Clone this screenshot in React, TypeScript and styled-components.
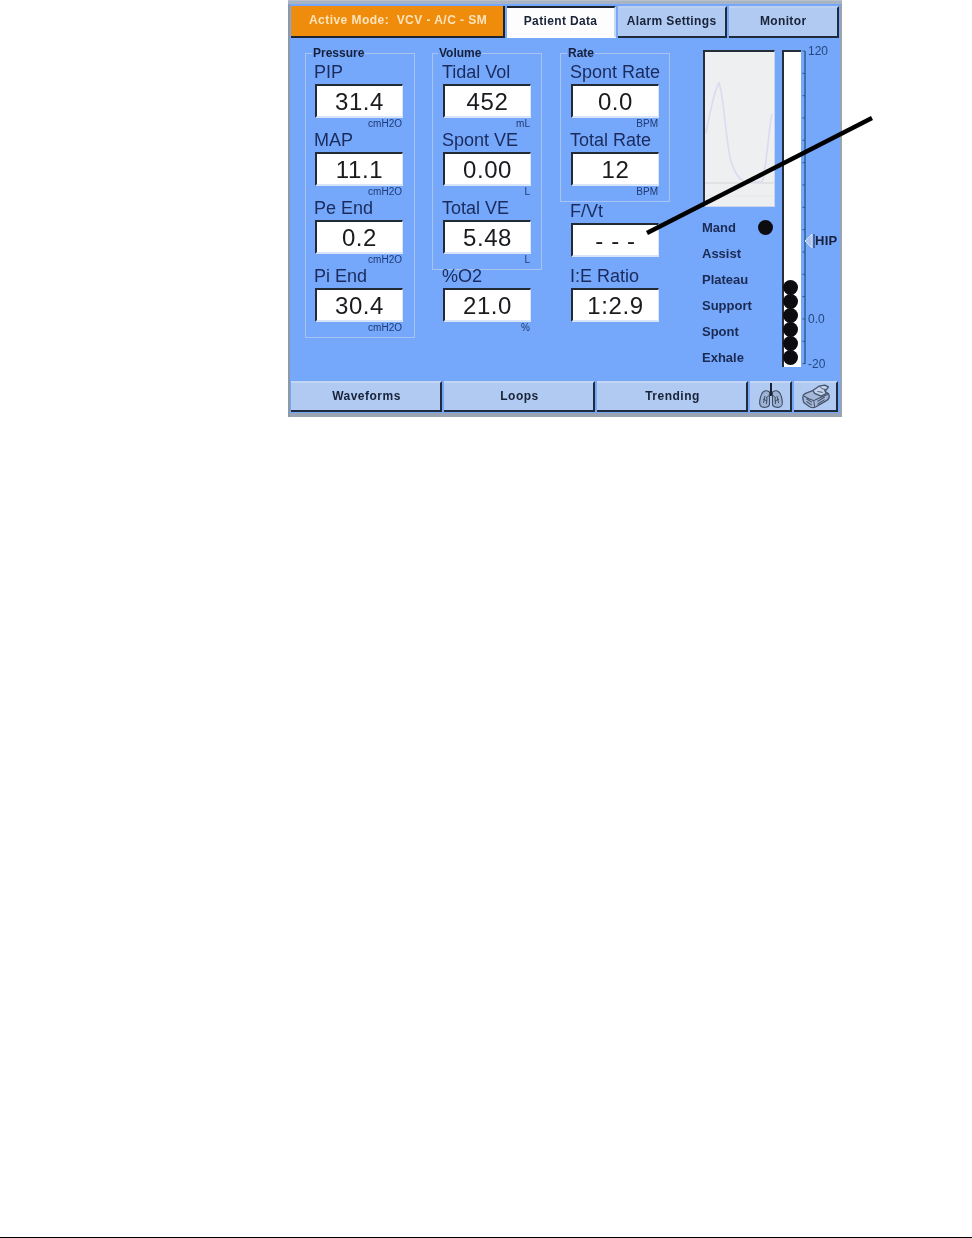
import React from "react";
import styled, { createGlobalStyle } from "styled-components";

const Global = createGlobalStyle`
  html, body { margin: 0; padding: 0; background: #fff; }
  body { font-family: "Liberation Sans", Arial, sans-serif; }
`;

const Page = styled.div`
  width: 972px;
  height: 1238px;
  display: flex;
  flex-direction: column;
  overflow: hidden;
`;
const Screen = styled.div`
  position: relative;
  box-sizing: border-box;
  width: 554px;
  height: 417px;
  margin-left: 288px;
  padding: 5px 3px 5px 3px;
  background: #75a7fa;
  display: flex;
  flex-direction: column;
  border-top: 1px solid #b9c0c8;
  box-shadow: inset 0 3px 0 #a7b4c6, inset 2px 0 0 #8d99a8, inset -2px 0 0 #98a4b2, inset 0 -4px 0 #9aa5b3;
`;
const TopBar = styled.div`
  display: flex;
  gap: 2px;
  height: 32px;
  flex: none;
  filter: blur(0.5px);
`;
const ModeBanner = styled.div`
  box-sizing: border-box;
  width: 215px;
  background: #f08c0c;
  border-right: 2px solid #1c2430;
  border-bottom: 2px solid #1c2430;
  color: #fbe3bb;
  font-size: 12px;
  font-weight: 700;
  line-height: 29px;
  padding-left: 18px;
  white-space: pre;
  letter-spacing: 0.45px;
`;
const Tab = styled.div<{ $active?: boolean; $w: number }>`
  box-sizing: border-box;
  width: ${(p) => p.$w}px;
  display: flex;
  align-items: center;
  justify-content: center;
  padding-bottom: 3px;
  font-size: 12px;
  font-weight: 700;
  letter-spacing: 0.35px;
  color: #182238;
  background: ${(p) => (p.$active ? "#fdfdfd" : "#b1caf1")};
  border-top: 2px solid ${(p) => (p.$active ? "#1c2430" : "#bcd0f0")};
  border-right: 2px solid ${(p) => (p.$active ? "#c9d8f2" : "#1f2a3a")};
  border-bottom: 2px solid ${(p) => (p.$active ? "#fdfdfd" : "#1f2a3a")};
`;
const Body = styled.div`
  flex: 1;
  display: flex;
  padding: 8px 0 0 14px;
  min-height: 0;
  filter: blur(0.5px);
`;
const Column = styled.div`
  width: 110px;
  margin-right: 18px;
  flex: none;
  &:first-child { margin-right: 17px; }
`;
const Group = styled.fieldset<{ $inset: number }>`
  box-sizing: border-box;
  width: 110px;
  margin: 0;
  padding: 4px 0 1px ${(p) => p.$inset}px;
  border: 1px solid #a9c4f0;
  min-inline-size: 0;
`;
const GroupTitle = styled.legend<{ $nudge: number }>`
  font-size: 12px;
  line-height: 14px;
  font-weight: 700;
  color: #16203a;
  padding: 0 1px;
  margin-left: ${(p) => p.$nudge}px;
`;
const LooseStack = styled.div<{ $top: number }>`
  display: flex;
  flex-direction: column;
  gap: 11px;
  margin: ${(p) => p.$top}px 0 0 11px;
`;
const Field = styled.div`
  width: 88px;
`;
const FieldLabel = styled.div`
  font-size: 18px;
  line-height: 17px;
  height: 20px;
  color: #1a2b5c;
  white-space: nowrap;
  margin-left: -1px;
`;
const ValueBox = styled.div`
  box-sizing: border-box;
  height: 34px;
  background: #fff;
  border-top: 2px solid #222a36;
  border-left: 2px solid #222a36;
  border-right: 1px solid #d8e4f8;
  border-bottom: 2px solid #d8e4f8;
  font-size: 24px;
  line-height: 31px;
  letter-spacing: 0.6px;
  text-align: center;
  color: #1b1b1f;
`;
const Unit = styled.div`
  height: 14px;
  font-size: 10px;
  line-height: 11px;
  text-align: right;
  color: #1f3a74;
  padding-right: 1px;
`;
const Monitor = styled.div`
  width: 72px;
  margin: 4px 0 0 15px;
  flex: none;
`;
const WavePanel = styled.div`
  box-sizing: border-box;
  width: 72px;
  height: 157px;
  background: #eeeff1;
  border-top: 2px solid #262e3a;
  border-left: 2px solid #262e3a;
  border-right: 1px solid #c9d6ee;
  border-bottom: 1px solid #c9d6ee;
`;
const WaveSvg = styled.svg`
  display: block;
`;
const ModeList = styled.div`
  margin-top: 7px;
`;
const ModeRow = styled.div`
  height: 26px;
  display: flex;
  align-items: center;
  justify-content: space-between;
  font-size: 13px;
  font-weight: 700;
  color: #1a2a52;
  margin: 0 2px 0 -1px;
`;
const Dot = styled.span`
  width: 15px;
  height: 15px;
  border-radius: 50%;
  background: #0b0b10;
  flex: none;
`;
const Gauge = styled.div`
  box-sizing: border-box;
  width: 19px;
  height: 317px;
  margin: 4px 0 0 7px;
  flex: none;
  background: #fff;
  border-top: 2px solid #262e3a;
  border-left: 2px solid #262e3a;
  display: flex;
  flex-direction: column;
  justify-content: flex-end;
  padding-bottom: 2px;
`;
const GaugeDot = styled(Dot)`
  display: block;
  margin: -1px 0 0 -1px;
`;
const Scale = styled.div`
  position: relative;
  width: 36px;
  height: 330px;
  flex: none;
`;
const ScaleSvg = styled.svg`
  position: absolute;
  left: 0;
  top: 0;
`;
const ScaleLabel = styled.span<{ $y: number }>`
  position: absolute;
  left: 7px;
  top: ${(p) => p.$y}px;
  font-size: 12px;
  line-height: 14px;
  color: #24487f;
`;
const HighMark = styled.span`
  position: absolute;
  left: 14px;
  top: 188px;
  font-size: 13px;
  line-height: 14px;
  font-weight: 700;
  letter-spacing: 0.3px;
  color: #16203a;
`;
const BottomBar = styled.div`
  display: flex;
  gap: 2px;
  height: 31px;
  flex: none;
  filter: blur(0.5px);
`;
const NavButton = styled.div<{ $w: number }>`
  box-sizing: border-box;
  width: ${(p) => p.$w}px;
  display: flex;
  align-items: center;
  justify-content: center;
  padding: 0 0 1px 2px;
  background: #b1caf1;
  border-top: 2px solid #c2d5f2;
  border-right: 2px solid #1f2a3a;
  border-bottom: 2px solid #1f2a3a;
  font-size: 12px;
  font-weight: 700;
  letter-spacing: 0.5px;
  color: #182238;
`;
const Pointer = styled.svg`
  position: absolute;
  left: 0;
  top: 0;
  overflow: visible;
  pointer-events: none;
`;
const Rule = styled.div`
  margin-top: auto;
  height: 1px;
  background: #000;
  flex: none;
`;

type F = { label: string; value: string; unit?: string };

const Metric = ({ label, value, unit }: F) => (
  <Field>
    <FieldLabel>{label}</FieldLabel>
    <ValueBox>{value}</ValueBox>
    {unit !== undefined && <Unit>{unit}</Unit>}
  </Field>
);

const pressure: F[] = [
  { label: "PIP", value: "31.4", unit: "cmH2O" },
  { label: "MAP", value: "11.1", unit: "cmH2O" },
  { label: "Pe End", value: "0.2", unit: "cmH2O" },
  { label: "Pi End", value: "30.4", unit: "cmH2O" },
];
const volume: F[] = [
  { label: "Tidal Vol", value: "452", unit: "mL" },
  { label: "Spont VE", value: "0.00", unit: "L" },
  { label: "Total VE", value: "5.48", unit: "L" },
];
const rate: F[] = [
  { label: "Spont Rate", value: "0.0", unit: "BPM" },
  { label: "Total Rate", value: "12", unit: "BPM" },
];
const modes = ["Mand", "Assist", "Plateau", "Support", "Spont", "Exhale"];

const Lungs = () => (
  <svg width="28" height="26" viewBox="0 0 28 26" fill="none" stroke="#3f4d64" strokeWidth="1.1">
    <path d="M12.5 9C8 6 4.500 9 3.500 14c-1 4-2 9 1.500 10 3 1 7.500 0 7.500-3z" fill="#9db3d6" />
    <path d="M15.500 9c4.500-3 8 0 9 5 1 4 2 9-1.500 10-3 1-7.500 0-7.500-3z" fill="#9db3d6" />
    <path d="M14 11l-5 4M14 11l5 4M8 13l-1.500 7M10 15l-.5 6M6 16l4 2M20 13l1.500 7M18 15l.5 6M22 16l-4 2" strokeWidth="1" />
    <path d="M14 0v13" stroke="#1a2232" strokeWidth="2" />
  </svg>
);
const Printer = () => (
  <svg width="31" height="25" viewBox="0 0 34 27" fill="none" stroke="#465268" strokeWidth="1.4" strokeLinejoin="round">
    <path d="M2 14c0-2 1-3 3-4l13-5 10 4c2 1 3 2 3 4s-1 4-3 5l-12 7c-2 1-4 1-6 0l-6-4c-2-2-2-4-2-7z" fill="#a4b9da" />
    <path d="M3 13c4 2 7 4 11 5 5-2 10-5 16-7M14 18l1 7M6 16l6 4M6 19l6 4M18 19l8-5M18 22l8-5" strokeWidth="1.1" />
    <path d="M13 7l7-5 6-1 4 2-2 3-2 1 2 3-6 3-7-3z" fill="#c4d4ee" />
    <path d="M20 2l3 3 5 1M18 8l6 1" strokeWidth="1" />
  </svg>
);

export default function App() {
  return (
    <Page>
      <Global />
      <Screen>
        <TopBar>
          <ModeBanner>{"Active Mode:  VCV - A/C - SM"}</ModeBanner>
          <Tab $active $w={109}>Patient Data</Tab>
          <Tab $w={110}>Alarm Settings</Tab>
          <Tab $w={110}>Monitor</Tab>
        </TopBar>
        <Body>
          <Column>
            <Group $inset={9}>
              <GroupTitle $nudge={-3}>Pressure</GroupTitle>
              {pressure.map((f) => <Metric key={f.label} {...f} />)}
            </Group>
          </Column>
          <Column>
            <Group $inset={10}>
              <GroupTitle $nudge={-5}>Volume</GroupTitle>
              {volume.map((f) => <Metric key={f.label} {...f} />)}
            </Group>
            <LooseStack $top={-2}>
              <Metric label="%O2" value="21.0" unit="%" />
            </LooseStack>
          </Column>
          <Column>
            <Group $inset={10}>
              <GroupTitle $nudge={-4}>Rate</GroupTitle>
              {rate.map((f) => <Metric key={f.label} {...f} />)}
            </Group>
            <LooseStack $top={1}>
              <Metric label="F/Vt" value="- - -" />
              <Metric label="I:E Ratio" value="1:2.9" />
            </LooseStack>
          </Column>
          <Monitor>
            <WavePanel>
              <WaveSvg width="69" height="154" viewBox="0 0 69 154" fill="none">
                <path d="M0 131H69" stroke="#d4d5d8" strokeWidth="1.2" />
                <path d="M0 144H69" stroke="#e6e7e9" />
                <path d="M1 81C6 55 10 36 14 31c5 14 6 50 11 74 4 16 9 23 16 25h16c2-3 3-14 5-30 2-16 3-30 5-38" stroke="#dcdaf0" strokeWidth="1.6" />
              </WaveSvg>
            </WavePanel>
            <ModeList>
              {modes.map((m, i) => (
                <ModeRow key={m}>
                  {m}
                  {i === 0 && <Dot />}
                </ModeRow>
              ))}
            </ModeList>
          </Monitor>
          <Gauge>
            {Array.from({ length: 6 }, (_, i) => <GaugeDot key={i} />)}
          </Gauge>
          <Scale>
            <ScaleSvg width="36" height="330" viewBox="0 0 36 330" fill="none">
              <path d="M4 5V318" stroke="#2a5a8e" strokeWidth="1.4" />
              {Array.from({ length: 15 }, (_, i) => (
                <path key={i} d={`M1.5 ${5 + i * 22.33}H4`} stroke="#2a5a8e" />
              ))}
              <path d="M11 188L4 195l7 7z" fill="#a9c4f0" stroke="#d9e4f7" />
              <path d="M13 188V202" stroke="#16203a" strokeWidth="1" />
            </ScaleSvg>
            <ScaleLabel $y={-2}>120</ScaleLabel>
            <ScaleLabel $y={266}>0.0</ScaleLabel>
            <ScaleLabel $y={311}>-20</ScaleLabel>
            <HighMark>HIP</HighMark>
          </Scale>
        </Body>
        <BottomBar>
          <NavButton $w={151}>Waveforms</NavButton>
          <NavButton $w={151}>Loops</NavButton>
          <NavButton $w={151}>Trending</NavButton>
          <NavButton $w={42}><Lungs /></NavButton>
          <NavButton $w={44}><Printer /></NavButton>
        </BottomBar>
        <Pointer width="600" height="240" viewBox="0 0 600 240">
          <path d="M359 232L584 117" stroke="#000" strokeWidth="4.5" />
        </Pointer>
      </Screen>
      <Rule />
    </Page>
  );
}
